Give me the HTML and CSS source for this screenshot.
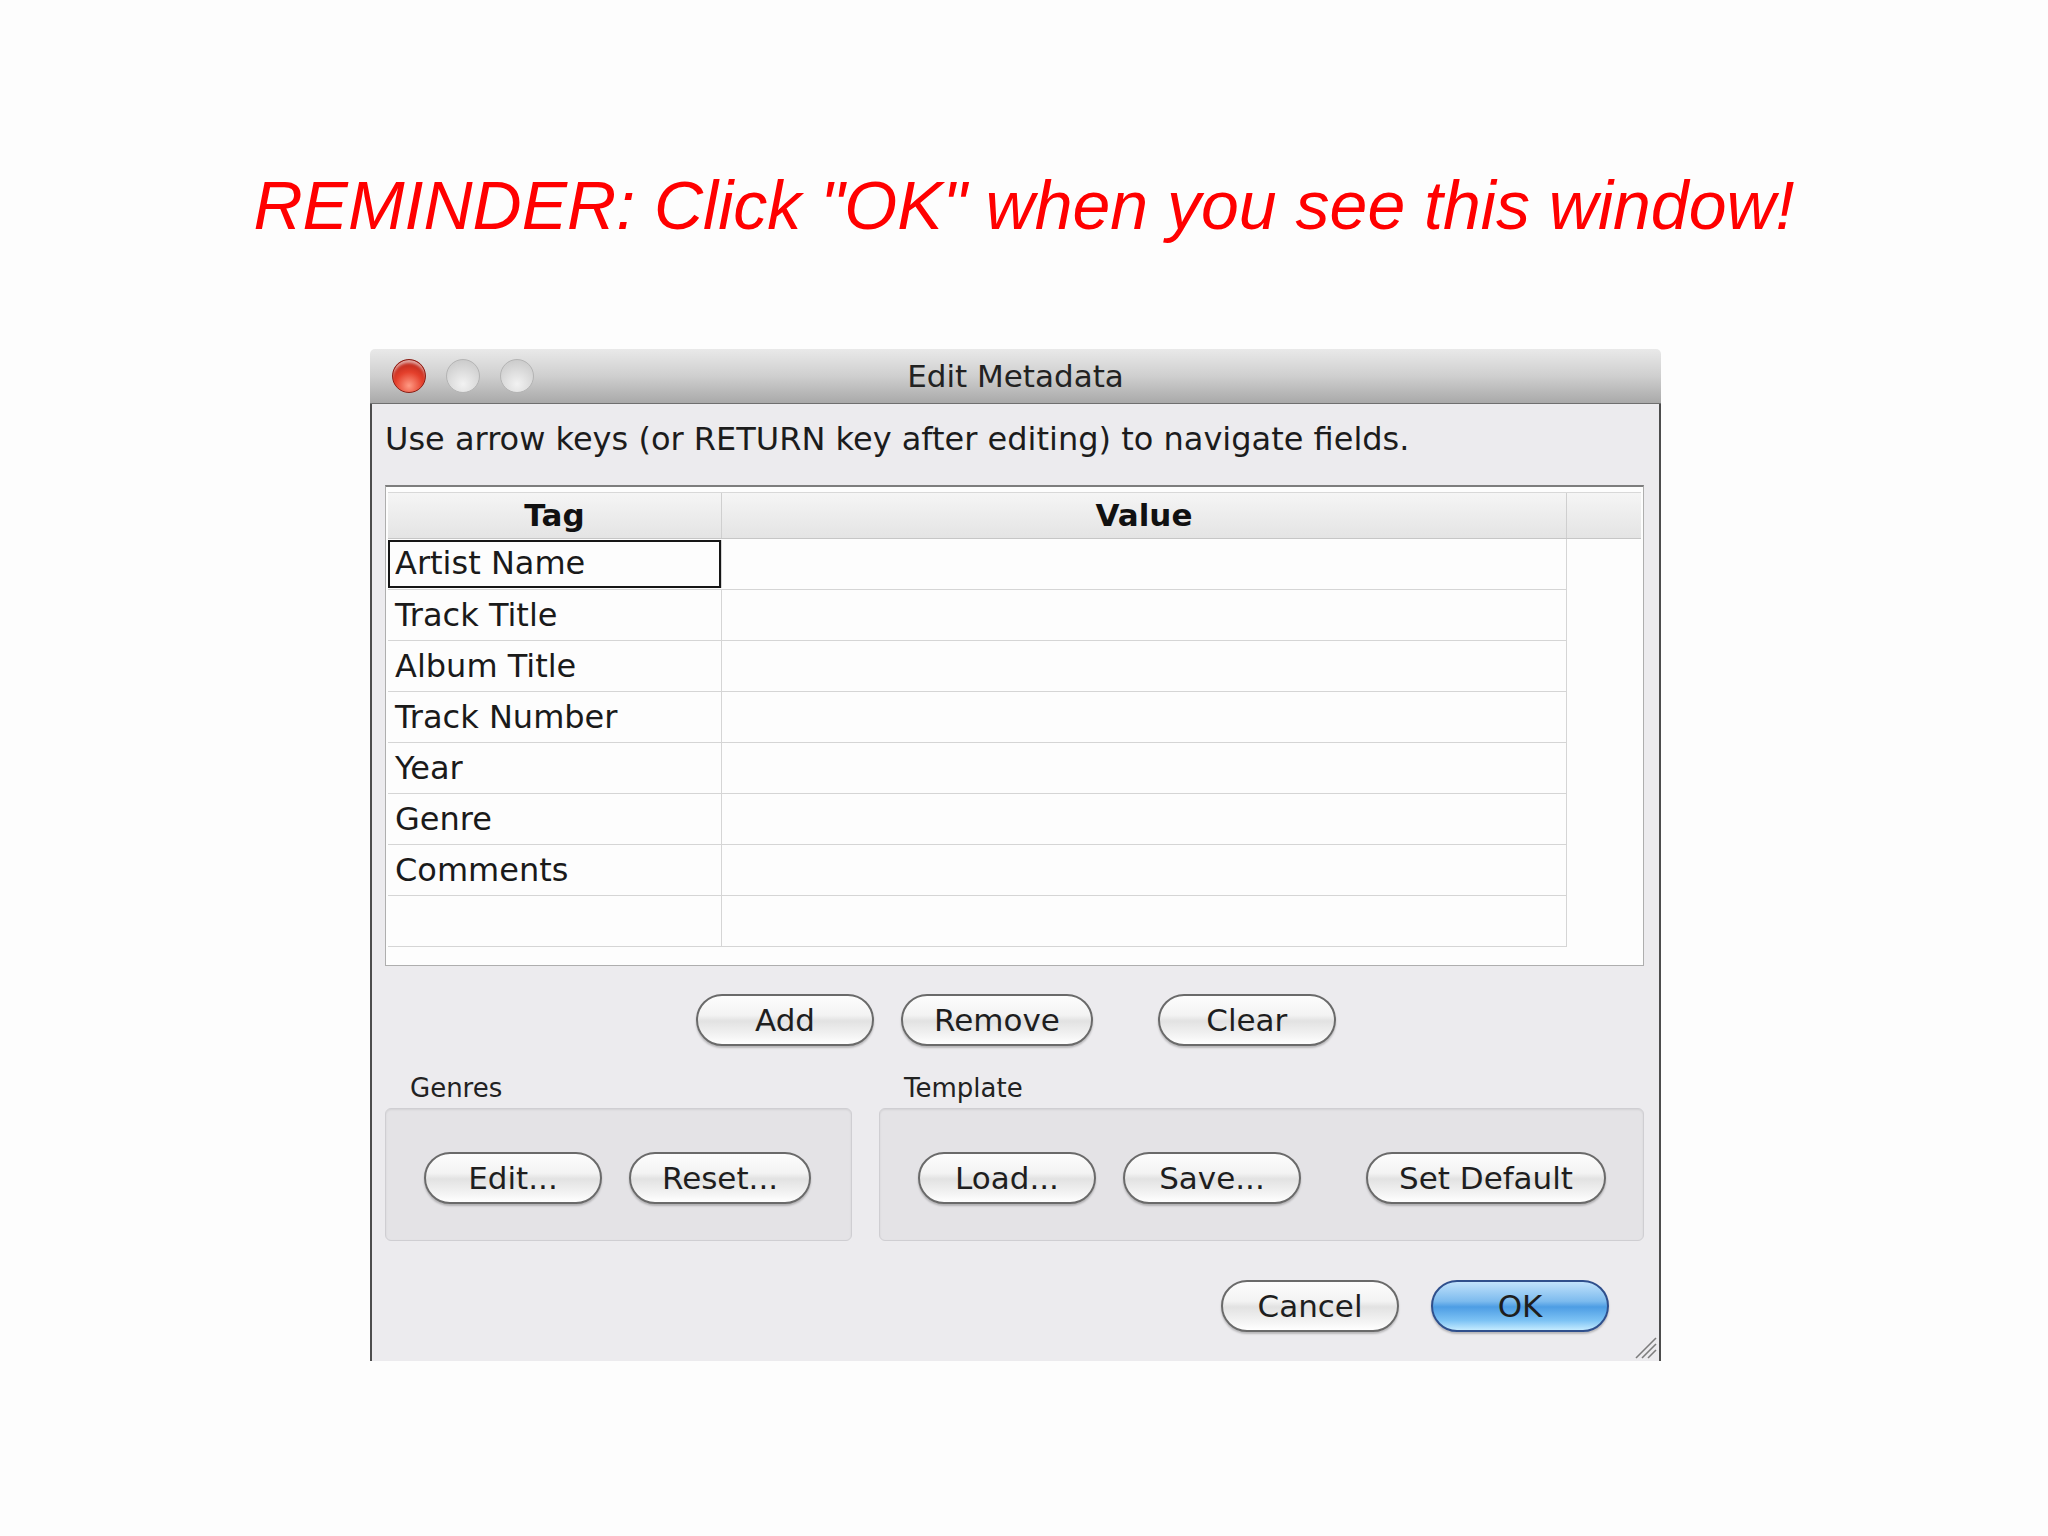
FILE: index.html
```html
<!DOCTYPE html>
<html lang="en">
<head>
  <meta charset="UTF-8">
  <title>Edit Metadata reminder</title>
  <link rel="stylesheet" href="styles.css">
</head>
<body>

  <h1 class="reminder">REMINDER: Click "OK" when you see this window!</h1>

  <!-- Edit Metadata dialog -->
  <div class="window">
    <div class="titlebar">
      <div class="lights">
        <span class="light close"></span>
        <span class="light"></span>
        <span class="light"></span>
      </div>
      <div class="title">Edit Metadata</div>
      <div></div>
    </div>

    <div class="content">
      <p class="hint">Use arrow keys (or RETURN key after editing) to navigate fields.</p>

      <div class="pane">
        <div class="head">
          <div class="th tag">Tag</div>
          <div class="th val">Value</div>
          <div class="th corner"></div>
        </div>
        <div class="row"><div class="td tag selected">Artist Name</div><div class="td val"></div></div>
        <div class="row"><div class="td tag">Track Title</div><div class="td val"></div></div>
        <div class="row"><div class="td tag">Album Title</div><div class="td val"></div></div>
        <div class="row"><div class="td tag">Track Number</div><div class="td val"></div></div>
        <div class="row"><div class="td tag">Year</div><div class="td val"></div></div>
        <div class="row"><div class="td tag">Genre</div><div class="td val"></div></div>
        <div class="row"><div class="td tag">Comments</div><div class="td val"></div></div>
        <div class="row"><div class="td tag"></div><div class="td val"></div></div>
      </div>

      <div class="actions">
        <button class="btn">Add</button>
        <button class="btn">Remove</button>
        <button class="btn wide-gap">Clear</button>
      </div>

      <div class="groups">
        <div class="group genres">
          <div class="group-label">Genres</div>
          <div class="group-box">
            <button class="btn">Edit...</button>
            <button class="btn">Reset...</button>
          </div>
        </div>
        <div class="group template">
          <div class="group-label">Template</div>
          <div class="group-box">
            <button class="btn">Load...</button>
            <button class="btn">Save...</button>
            <button class="btn wide-gap">Set Default</button>
          </div>
        </div>
      </div>

      <div class="footer">
        <button class="btn">Cancel</button>
        <button class="btn default">OK</button>
      </div>

      <svg class="grip" width="24" height="24" viewBox="0 0 24 24">
        <line x1="3" y1="23" x2="23" y2="3" stroke="#7c7c7c" stroke-width="1.6"/>
        <line x1="9" y1="23" x2="23" y2="9" stroke="#7c7c7c" stroke-width="1.6"/>
        <line x1="15" y1="23" x2="23" y2="15" stroke="#7c7c7c" stroke-width="1.6"/>
      </svg>
    </div>
  </div>

</body>
</html>
```

FILE: styles.css
```css
body {
  margin: 0;
  background-color: #fdfdfd;
}

.reminder {
  margin: 166px 0 105px;
  text-align: center;
  font: italic 400 68px/78px "Liberation Sans", Arial, sans-serif;
  color: #ff0000;
}

.window {
  margin-left: 370px;
  width: 1291px;
  height: 1012px;
  display: flex;
  flex-direction: column;
  font-family: "DejaVu Sans", sans-serif;
  color: #1c1c1c;
}

/* title bar */
.titlebar {
  height: 55px;
  box-sizing: border-box;
  display: grid;
  grid-template-columns: 1fr auto 1fr;
  align-items: center;
  background: linear-gradient(#e9e9e9, #cfcfcf 50%, #a9a9a9);
  border-bottom: 1px solid #6f6f6f;
  border-radius: 5px 5px 0 0;
}

.lights {
  display: flex;
  gap: 20px;
  padding-left: 22px;
}

.light {
  width: 34px;
  height: 34px;
  border-radius: 50%;
  box-sizing: border-box;
  border: 1px solid #b4b4b4;
  background: radial-gradient(circle at 50% 75%, #f2f2f2, #d6d6d6 60%, #c4c4c4);
}

.light.close {
  border-color: #8c1d14;
  background: radial-gradient(circle at 50% 80%, #ff9a84, #e4402c 45%, #b8261a 80%, #8e1a10);
  box-shadow: inset 0 4px 3px -1px rgba(255, 255, 255, 0.6);
}

.title {
  font-size: 31px;
  color: #222;
}

/* dialog body */
.content {
  flex: 1;
  position: relative;
  background-color: #ecebee;
  border-left: 2px solid #4d4d4d;
  border-right: 2px solid #4d4d4d;
  padding: 15px 15px 0 13px;
}

.hint {
  margin: 0;
  font-size: 32px;
  line-height: 40px;
  white-space: nowrap;
}

/* tag table */
.pane {
  margin-top: 26px;
  background-color: #fdfdfd;
  border: 1px solid #aeaeae;
  border-top: 2px solid #7d7d7d;
  padding: 5px 2px 18px;
}

.head {
  display: flex;
  height: 47px;
  box-sizing: border-box;
  background: linear-gradient(#f5f5f5, #e4e4e4);
  border-top: 1px solid #d8d8d8;
  border-bottom: 1px solid #c6c6c6;
}

.th {
  font-size: 31px;
  font-weight: bold;
  color: #111;
  text-align: center;
  line-height: 44px;
  box-sizing: border-box;
}

.tag { width: 334px; }
.val { width: 845px; }

.th.tag, .th.val { border-right: 1px solid #cfcfcf; }
.th.corner { flex: 1; }

.row {
  display: flex;
  width: 1179px;
  height: 51px;
  box-sizing: border-box;
  border-bottom: 1px solid #d5d5d5;
  border-right: 1px solid #d5d5d5;
}

.td {
  box-sizing: border-box;
  font-size: 32px;
  line-height: 50px;
  padding-left: 7px;
  color: #1a1a1a;
}

.td.tag { border-right: 1px solid #d5d5d5; }

.td.selected {
  box-shadow: inset 0 0 0 2px #161616;
  margin-top: 1px;
  height: 48px;
  line-height: 46px;
}

/* aqua buttons */
.btn {
  height: 52px;
  min-width: 178px;
  padding: 0 31px;
  box-sizing: border-box;
  border: 2px solid #6a6a6a;
  border-radius: 26px;
  background: linear-gradient(#fdfdfd, #f3f3f3 40%, #e2e2e2 52%, #f2f2f2 80%, #ffffff);
  box-shadow: 0 2px 2px rgba(0, 0, 0, 0.22);
  font-family: "DejaVu Sans", sans-serif;
  font-size: 31px;
  color: #1e1e1e;
  line-height: 46px;
}

.btn.default {
  border-color: #2f4f8c;
  background: linear-gradient(#c0e2fb, #7dbbee 40%, #4d9de4 52%, #7cc2f4 80%, #c4ebff);
}

.actions {
  display: flex;
  gap: 27px;
  margin-top: 28px;
  padding-left: 311px;
}

.wide-gap { margin-left: 38px; }

.groups {
  display: flex;
  gap: 27px;
  margin-top: 27px;
}

.genres { width: 467px; }
.template { width: 765px; }

.group-label {
  font-size: 26px;
  line-height: 30px;
  padding-left: 25px;
  margin-bottom: 5px;
  color: #222;
}

.group-box {
  display: flex;
  gap: 27px;
  padding: 43px 0 36px 38px;
  background-color: #e4e3e6;
  border: 1px solid #cfced2;
  border-radius: 6px;
  box-shadow: inset 0 1px 2px rgba(0, 0, 0, 0.08);
}

.footer {
  display: flex;
  justify-content: flex-end;
  gap: 32px;
  margin-top: 39px;
  padding-right: 35px;
}

.grip {
  position: absolute;
  right: 2px;
  bottom: 2px;
}
```
